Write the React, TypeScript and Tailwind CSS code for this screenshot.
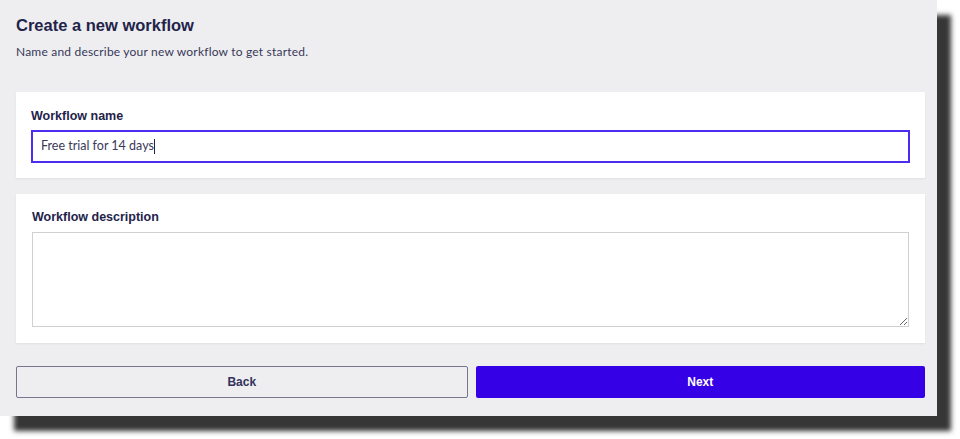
import { useState } from 'react';

const avenir = { fontFamily: 'Lato, "Noto Sans", sans-serif' };

export default function App() {
  const [name, setName] = useState('Free trial for 14 days');
  const [description, setDescription] = useState('');

  return (
    <div className="w-[960px] h-[439px] bg-white overflow-hidden">
      {/* Window */}
      <div className="w-[937px] h-[416px] bg-[#eeeef1] shadow-[14px_15px_5px_#363636] pl-4 pr-3 pt-[14px] font-['Liberation_Sans',Arial,sans-serif] text-[#23234a]">
        <h1 className="text-[16.5px] leading-[22px] font-bold">Create a new workflow</h1>
        <p className="mt-[8px] text-[12px] leading-4 tracking-[0.2px] text-[#383858]" style={avenir}>
          Name and describe your new workflow to get started.
        </p>

        {/* Name card */}
        <div className="mt-8 bg-white px-[15px] pt-4 pb-[15px] shadow-[0_1px_2px_rgba(0,0,0,0.06)]">
          <label className="block text-[12.5px] leading-4 font-bold">Workflow name</label>
          <div className="mt-[6px] flex items-center w-full h-[33px] border-2 border-[#4a2df0] px-2">
            <input
              value={name}
              onChange={(e) => setName(e.target.value)}
              className="w-[113px] text-[12.5px] text-[#3a3a5a] outline-none"
              style={avenir}
            />
            <span className="w-px h-[15px] bg-[#23234a]" />
          </div>
        </div>

        {/* Description card */}
        <div className="mt-4 bg-white px-4 pt-[15px] pb-4 shadow-[0_1px_2px_rgba(0,0,0,0.06)]">
          <label className="block text-[12.5px] leading-4 font-bold">Workflow description</label>
          <textarea
            value={description}
            onChange={(e) => setDescription(e.target.value)}
            className="mt-[7px] block w-full h-[95px] border border-[#cfcfd4] p-2 text-[13px] outline-none"
            style={avenir}
          />
        </div>

        {/* Actions */}
        <div className="mt-[23px] flex gap-2">
          <button
            type="button"
            className="flex-1 h-8 border border-[#76768e] rounded-[2px] text-[12px] font-bold text-[#32325a]"
          >
            Back
          </button>
          <button
            type="button"
            className="flex-1 h-8 bg-[#3600e6] rounded-[2px] text-[12px] font-bold text-white"
          >
            Next
          </button>
        </div>
      </div>
    </div>
  );
}
